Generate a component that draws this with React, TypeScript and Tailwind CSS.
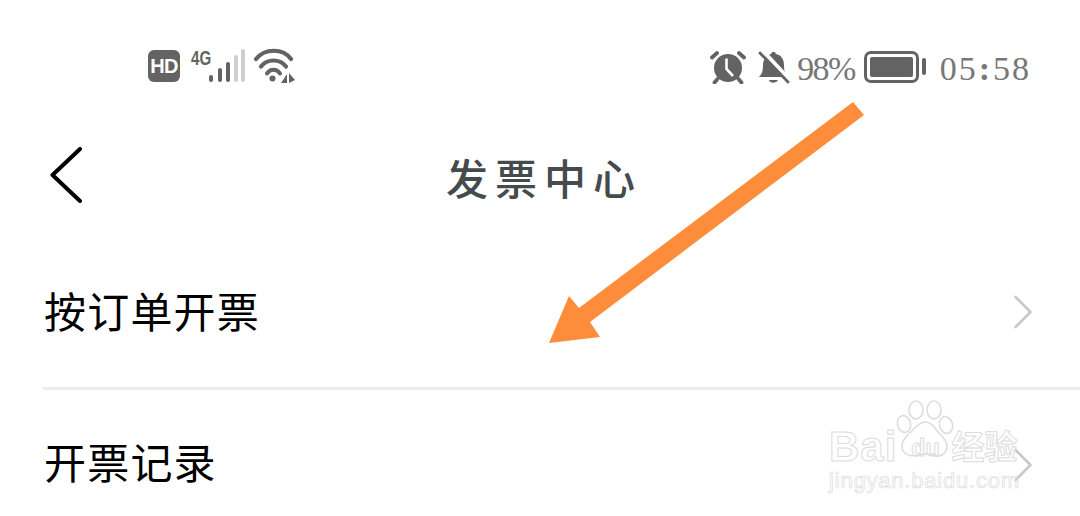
function Chevron() {
  return (
    <svg width="20" height="34" viewBox="0 0 20 34" fill="none" className="shrink-0">
      <path d="M2.5 2 17.5 17 2.5 32" stroke="#c8c8c8" strokeWidth="2.6" strokeLinecap="round" strokeLinejoin="round" />
    </svg>
  );
}

function StatusLeft() {
  return (
    <div className="flex items-start">
      <div className="flex h-8 w-8 items-center justify-center rounded-[6px] bg-[#636363] font-['Liberation_Sans',sans-serif] text-[20px] leading-none font-bold tracking-[-0.8px] text-white">
        HD
      </div>
      <span className="mt-[-4px] ml-[11px] w-[18px] origin-left scale-x-[0.72] font-['Liberation_Sans',sans-serif] text-[21px] leading-[24px] font-bold text-[#636363]">
        4G
      </span>
      <svg width="36" height="34" viewBox="0 0 36 34" className="mt-[-2px] shrink-0">
        <rect x="0" y="27" width="4" height="7" rx="2" fill="#636363" />
        <rect x="9" y="20" width="4" height="14" rx="2" fill="#636363" />
        <rect x="17" y="14" width="4" height="20" rx="2" fill="#636363" />
        <rect x="25" y="7" width="4" height="27" rx="2" fill="#cfcfcf" />
        <rect x="32" y="1" width="4" height="33" rx="2" fill="#cfcfcf" />
      </svg>
      <svg width="42" height="37" viewBox="0 0 42 37" fill="none" className="mt-[-3px] ml-[8px] shrink-0">
        <path d="M3 12C12 1 30 1 38 12" stroke="#636363" strokeWidth="4.2" strokeLinecap="round" />
        <path d="M8 19.5C14 11.5 27 11.5 33 19.5" stroke="#636363" strokeWidth="4.2" strokeLinecap="round" />
        <path d="M14 26.5C17 21.5 24 21.5 27 26.5" stroke="#636363" strokeWidth="4" strokeLinecap="round" />
        <circle cx="19.5" cy="31.5" r="3" fill="#636363" />
        <path d="M34 27V36H28zM36 26V36L42 33z" fill="#636363" />
      </svg>
    </div>
  );
}

function StatusRight() {
  return (
    <div className="flex items-center font-['Liberation_Serif',serif] text-[#777777]">
      <svg width="36" height="34" viewBox="0 0 36 34" fill="none">
        <circle cx="18" cy="18" r="14" fill="#636363" />
        <path d="M16.5 8.5V19l6.5 7" stroke="#fff" strokeWidth="2.6" />
        <path d="M2 7.5 7 3M34 7.5 29 3M7.5 29 4.5 32.5M28.5 29 31.5 32.5" stroke="#636363" strokeWidth="3.8" strokeLinecap="round" />
      </svg>
      <svg width="34" height="34" viewBox="0 0 34 34" fill="none" className="ml-[11px]">
        <path d="M2 27c3-3 4-6 4-12 0-6 4-10 8-11 1-3 4-3 5 0 5 1 8 5 8 11 0 6 1 9 4 12z" fill="#636363" />
        <path d="M12 30c1 3.500 7 3.500 9 0z" fill="#636363" />
        <path d="M6 1 33 30" stroke="#fff" strokeWidth="4" />
        <path d="M3 3 31 32" stroke="#636363" strokeWidth="2.8" strokeLinecap="round" />
      </svg>
      <span className="mt-[4px] ml-[6px] text-[34px] leading-none tracking-[-1.6px]">98%</span>
      <div className="ml-[9px] flex h-[32px] w-[55px] items-center rounded-[7px] border-[3px] border-[#636363] p-[3px]">
        <div className="h-full w-full rounded-[2px] bg-[#636363]" />
      </div>
      <div className="ml-[3px] h-[17px] w-[4px] rounded-full bg-[#636363]" />
      <span className="mt-[4px] ml-[14px] flex items-center text-[34px] leading-none tracking-[2px]">
        05<span className="mx-[1px] font-bold">:</span>58
      </span>
    </div>
  );
}

function Row({ label, textOffset }: { label: string; textOffset: string }) {
  return (
    <div className="flex h-[150px] items-center justify-between pr-[47px]">
      <span className={`ml-[1px] text-[42px] leading-none tracking-[1.2px] text-black ${textOffset}`}>{label}</span>
      <Chevron />
    </div>
  );
}

// 百度经验水印
function Watermark() {
  return (
    <div className="absolute top-[399px] left-[829px] w-[200px] font-['Liberation_Sans',sans-serif] text-transparent">
      <svg width="64" height="62" viewBox="0 0 64 62" fill="none" stroke="#dddddd" strokeWidth="1.6" className="absolute top-0 left-[62px]">
        <ellipse cx="25" cy="11" rx="7" ry="9" />
        <ellipse cx="43" cy="11" rx="7" ry="9" />
        <ellipse cx="13" cy="25" rx="6.500" ry="8.500" transform="rotate(-15 13 25)" />
        <ellipse cx="55" cy="26" rx="6.500" ry="8.500" transform="rotate(-15 55 26)" />
        <path d="M34 23c6 0 9 5 13 10 4 4 9 8 9 14 0 7-6 11-12 10-4-1-7-2-10-2s-6 1-10 2c-7 0-13-3-13-10 0-6 4-10 9-14 4-4 8-10 14-10z" />
      </svg>
      <div className="mt-[27px] flex items-start text-[42px] leading-[42px] font-bold tracking-[1px] [-webkit-text-stroke:1px_#dcdcdc]">
        <span>Bai</span>
        <span className="mt-[10px] ml-[14px] text-[23px] leading-[24px] tracking-normal">du</span>
        <span className="mt-[1px] ml-[12px] font-['Noto_Sans_CJK_SC',sans-serif] text-[33px] leading-[36px] tracking-normal whitespace-nowrap">经验</span>
      </div>
      <div className="mt-[1px] text-[22px] leading-[24px] tracking-[0.8px] whitespace-nowrap [-webkit-text-stroke:0.7px_#dcdcdc]">jingyan.baidu.com</div>
    </div>
  );
}

export default function App() {
  return (
    <div className="relative h-[516px] w-[1080px] overflow-hidden bg-white font-['Noto_Sans_CJK_SC',sans-serif]">
      {/* Status bar */}
      <div className="mb-[2px] flex h-[133px] items-center justify-between pr-[49px] pl-[148px]">
        <StatusLeft />
        <StatusRight />
      </div>

      {/* Title bar */}
      <div className="relative flex h-[80px] items-center justify-center">
        <svg width="34" height="56" viewBox="0 0 34 56" fill="none" className="absolute top-[12px] left-[49px]">
          <path d="M31 2 3.500 28 31 54" stroke="#000" strokeWidth="4" strokeLinecap="round" strokeLinejoin="round" />
        </svg>
        <span className="mt-[3px] ml-[8px] text-[42px] leading-none font-medium tracking-[7px] text-[#454a4d]">发票中心</span>
      </div>

      {/* List */}
      <div className="mt-[22px] ml-[43px]">
        <Row label="按订单开票" textOffset="mt-[-4px]" />
        <div className="h-[3px] bg-[#ececec]" />
        <Row label="开票记录" textOffset="mt-[-8px]" />
      </div>

      {/* Annotation arrow */}
      <svg width="1080" height="516" viewBox="0 0 1080 516" className="pointer-events-none absolute inset-0">
        <path d="M549 343 569 296 579 308 853 102 864 115 590 322 600 337z" fill="#fd8d3a" />
      </svg>

      <Watermark />
    </div>
  );
}
